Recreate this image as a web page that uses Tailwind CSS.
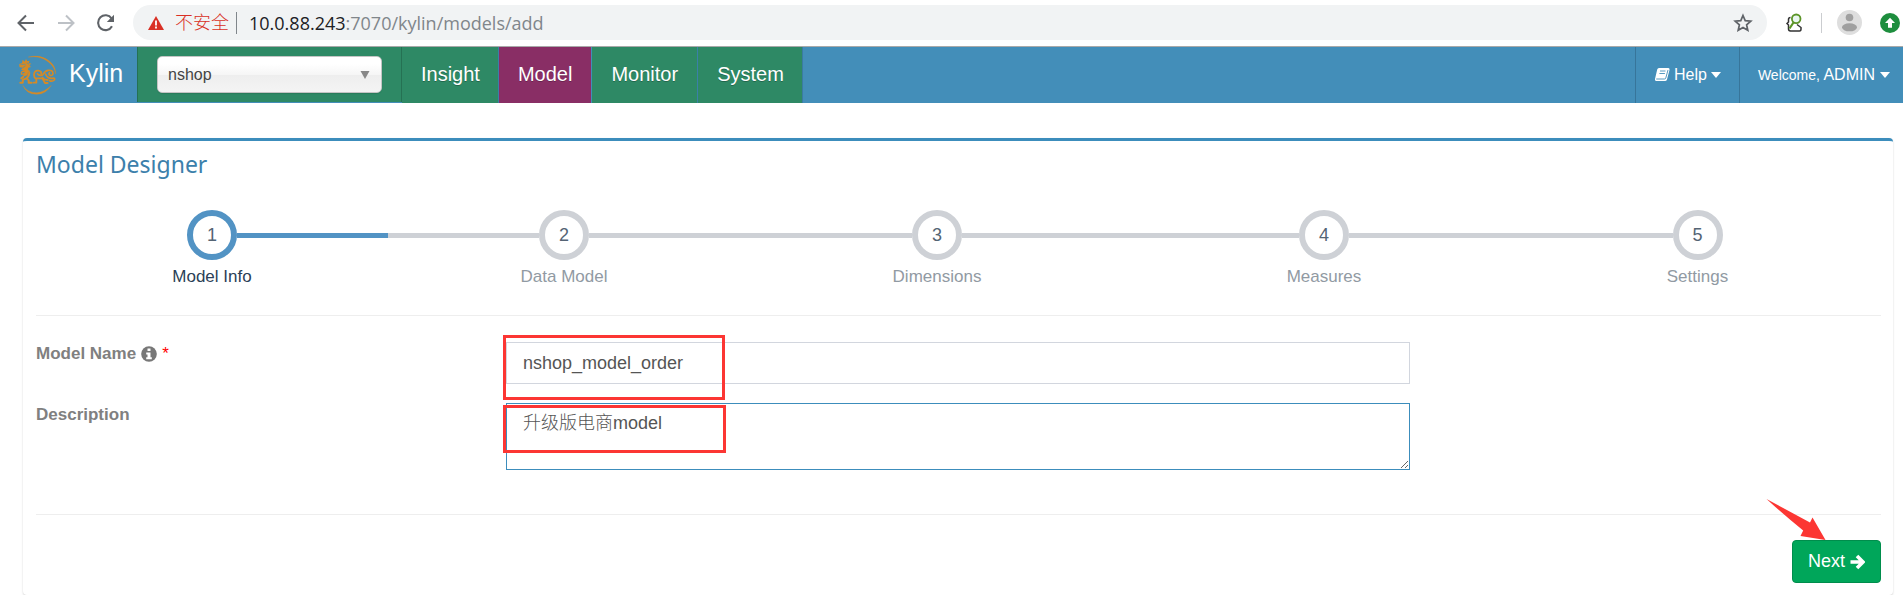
<!DOCTYPE html>
<html lang="en">
<head>
<meta charset="utf-8">
<title>Kylin - Model Designer</title>
<script src="https://cdn.jsdelivr.net/npm/@tailwindcss/browser@4"></script>
</head>
<body class="bg-white font-['Liberation_Sans','Noto_Sans_CJK_SC',sans-serif] text-[17px] text-[#444]">

<!-- Browser toolbar -->
<div class="flex h-[47px] items-center border-b border-[#a9a9a9] bg-white pb-px pl-4 font-['Open_Sans','Noto_Sans_CJK_SC',sans-serif]">
  <button type="button" aria-label="Back" class="mr-5 size-5 text-[#5f6368]">
    <svg viewBox="0 0 20 20" class="size-5" fill="none" stroke="currentColor" stroke-width="2"><path d="M18 10H3M10 2.500 2.500 10l7.500 7.500"/></svg>
  </button>
  <button type="button" aria-label="Forward" class="mr-5 size-5 text-[#bdc1c6]">
    <svg viewBox="0 0 20 20" class="size-5" fill="none" stroke="currentColor" stroke-width="2"><path d="M2 10h15M10 2.500 17.500 10 10 17.500"/></svg>
  </button>
  <button type="button" aria-label="Reload" class="mr-[17px] size-5 text-[#5f6368]">
    <svg viewBox="0 0 20 20" class="size-5"><path d="M16 13.200A7.400 7.400 0 1 1 15.600 5.500" fill="none" stroke="currentColor" stroke-width="2.100"/><path d="M18 1.800v7.200h-7.200z" fill="currentColor"/></svg>
  </button>
  <div class="flex h-[35px] min-w-0 flex-1 items-center rounded-full bg-[#f1f3f4] pl-[14px] pr-3">
    <svg viewBox="0 0 18 16" class="mr-[10px] h-4 w-[18px] shrink-0"><path d="M9 1 17 15H1z" fill="#d93025"/><path d="M9 5.500v5M9 11.500v2" stroke="#fff" stroke-width="1.800"/></svg>
    <span class="text-[18px] font-light text-[#d93025]">不安全</span>
    <span class="ml-[7px] mr-3 h-[22px] w-px bg-[#80868b]"></span>
    <span class="flex-1 whitespace-nowrap text-[18px] leading-6 text-[#80868b]"><span class="text-[#202124]">10.0.88.243</span>:7070/kylin/models/add</span>
    <button type="button" aria-label="Bookmark this page" class="mr-[2px] size-5 text-[#5f6368]">
      <svg viewBox="0 0 20 20" class="size-5" fill="none" stroke="currentColor" stroke-width="1.700"><path d="m10 2.500 2.200 5.100 5.600.5-4.200 3.700 1.200 5.500-4.800-2.900-4.800 2.900 1.200-5.500-4.200-3.700 5.600-.5z"/></svg>
    </button>
  </div>
  <button type="button" aria-label="Extension" class="ml-[18px] size-5">
    <svg viewBox="0 0 20 20" class="size-5" fill="none"><path d="M5.500 4.500Q3.500 4.500 3.500 6.500V9L2 10.500 3.500 12v4q0 1.800 2 2h9q1.500 0 1.500-2v-1.500l-4-3" stroke="#333" stroke-width="1.500"/><circle cx="11.200" cy="5.800" r="4.300" fill="#e9f6f0" stroke="#5b9427" stroke-width="1.800"/><path d="m8.500 9.500-4 6" stroke="#5b9427" stroke-width="2.200"/></svg>
  </button>
  <span class="ml-4 h-5 w-px bg-[#cbcdd0]"></span>
  <button type="button" aria-label="Profile" class="ml-[15px] size-[25px]">
    <svg viewBox="0 0 25 25" class="size-[25px]"><circle cx="12.500" cy="12.500" r="12.500" fill="#dedede"/><circle cx="12.500" cy="7.500" r="3.800" fill="#a0a0a0"/><ellipse cx="12.500" cy="17.300" rx="7.500" ry="4" fill="#a0a0a0"/></svg>
  </button>
  <button type="button" aria-label="Update available" class="ml-[18px] mr-[3px] size-5">
    <svg viewBox="0 0 20 20" class="size-5"><circle cx="10" cy="10" r="10" fill="#1e8e3e"/><path d="M10 4.800 15 10h-3v4.800H8V10H5z" fill="#fff"/></svg>
  </button>
</div>

<!-- Application navigation -->
<nav class="flex h-14 items-stretch bg-[#438eb9] text-white text-shadow-[0_1px_0_rgb(0_0_0/0.25)]">
  <a href="#" class="flex w-[137px] items-center pl-3 text-[25px] text-shadow-none">
    <svg viewBox="0 0 150 138" class="mr-[7px] h-[46px] w-[50px] shrink-0" fill="none" stroke="#d58a26" stroke-linecap="round" stroke-linejoin="round">
      <path d="M50 15Q85 6 112 27Q132 43 131 66Q127 42 108 29Q84 10 50 15z" fill="#d58a26" stroke-width="1"/>
      <path d="M33 101Q46 122 74 122Q98 121 118 100Q101 128 73 127Q43 126 33 101z" fill="#d58a26" stroke-width="1"/>
      <path d="M22 36l8-3 2-10 6 6 4-8 4 7 7-2-3 7 8 2-6 5 5 5-8 2-1 7 7 3-7 5-2 8-10 3-3-5 6-5-4-7-8-3 5-6-9-1-1-4z" fill="#d58a26" stroke="none"/>
      <path d="M37 59q-10-3-9 7q7 1 13-3" stroke-width="4"/>
      <path d="M52 62Q51 74 42 80l-9 3-1 9h-7M44 79l6 6v7h9M34 74l-6 5" stroke-width="6"/>
      <path d="M65 92h8V82q-7-5-7-13 0-14 13-13 10 1 9 10M74 79h17l8 14h8M92 77q4 7 15 7" stroke-width="5.500"/>
      <path d="M76 65q5 8 16 4q6-12 16-14q14-2 15 9-1 8-9 6-6-4-1-8M101 66q4 14 20 13q10-2 6 5-6 6-14 2" stroke-width="5"/>
      <path d="M27 37h12M33 47l7-5M45 33l5 3" stroke="#438eb9" stroke-width="2"/>
    </svg>
    <span class="pb-[2px]">Kylin</span>
  </a>
  <div class="mb-px flex w-[265px] items-center border-x border-[#257153] bg-[#2e8965] px-[19px]">
    <div class="relative w-full">
      <select aria-label="Project" class="block h-[37px] w-full appearance-none rounded-[5px] border border-[#c4c4c4] bg-[linear-gradient(#fff_20%,#f6f6f6_50%,#eee_52%,#f4f4f4_100%)] pl-[10px] text-[16px] text-[#444] shadow-[0_1px_1px_rgb(0_0_0/0.1)] text-shadow-none"><option>nshop</option></select>
      <svg viewBox="0 0 10 8" class="pointer-events-none absolute right-3 top-[15px] h-2 w-[10px]"><path d="M.5 0h9L5 8z" fill="#888"/></svg>
    </div>
  </div>
  <ul class="flex text-[20px]">
    <li class="flex border-r border-[#3a80a8]"><a href="#" class="flex items-center bg-[#2e8965] pb-[2px] pl-[19px] pr-[18px]">Insight</a></li>
    <li class="flex border-r border-[#438eb9]"><a href="#" aria-current="page" class="flex items-center bg-[#892e65] px-[19px] pb-[2px]">Model</a></li>
    <li class="flex border-r border-[#3a80a8]"><a href="#" class="flex items-center bg-[#2e8965] px-[19px] pb-[2px]">Monitor</a></li>
    <li class="flex border-r border-[#3a7ba2]"><a href="#" class="flex items-center bg-[#2e8965] pb-[2px] pl-[19px] pr-[18px]">System</a></li>
  </ul>
  <ul class="ml-auto flex text-[16px]">
    <li class="flex border-l border-[#37759a]">
      <button type="button" class="flex items-center gap-1 px-[18px]">
        <svg viewBox="0 0 16 16" class="size-4"><path d="M5 1h9.500q1.500.3 1 2L13 12.500q-.5 1.500-2 1.500H2q-1.500-.4-1-2L3.200 2.500Q3.600 1.200 5 1z" fill="#fff"/><path d="M6 4h5.500M5.400 6.500h5.500M2.200 12h8.300q1 0 1.300-1L14 3" stroke="#438eb9" stroke-width=".9" fill="none"/></svg>
        Help
        <svg viewBox="0 0 10 6" class="h-[6px] w-[10px]"><path d="M0 0h10L5 6z" fill="#fff"/></svg>
      </button>
    </li>
    <li class="flex border-l border-[#37759a]">
      <button type="button" class="flex items-center gap-[5px] pl-[18px] pr-[13px]">
        <span><small class="text-[14px]">Welcome,</small> ADMIN</span>
        <svg viewBox="0 0 10 6" class="h-[6px] w-[10px]"><path d="M0 0h10L5 6z" fill="#fff"/></svg>
      </button>
    </li>
  </ul>
</nav>

<!-- Model designer -->
<main class="ml-[23px] mr-[10px] mt-[35px] rounded-[4px] border-t-3 border-[#3c8dbc] bg-white pl-[13px] pr-3 pb-3 shadow-[0_1px_2px_rgb(0_0_0/0.18)]">
  <h1 class="pt-[7px] font-['Noto_Sans','Open_Sans',sans-serif] text-[23px] leading-8 text-[#3c80ab]">Model Designer</h1>

  <ol class="mt-[30px] grid grid-cols-[352fr_352fr_394fr_380fr_367fr] text-center leading-6 text-[#919aa3]">
    <li class="text-[#2b3f57]">
      <div class="flex items-center">
        <span class="flex-1"></span>
        <span class="flex size-[50px] items-center justify-center rounded-full border-6 border-[#5293c4] text-[18px] text-[#546474]">1</span>
        <span class="h-[5px] flex-1 bg-[#5293c4]"></span>
      </div>
      <div class="mt-[5px]">Model Info</div>
    </li>
    <li>
      <div class="flex items-center">
        <span class="h-[5px] flex-1 bg-[#ced1d6]"></span>
        <span class="flex size-[50px] items-center justify-center rounded-full border-6 border-[#ced1d6] text-[18px] text-[#546474]">2</span>
        <span class="h-[5px] flex-1 bg-[#ced1d6]"></span>
      </div>
      <div class="mt-[5px]">Data Model</div>
    </li>
    <li>
      <div class="flex items-center">
        <span class="h-[5px] flex-1 bg-[#ced1d6]"></span>
        <span class="flex size-[50px] items-center justify-center rounded-full border-6 border-[#ced1d6] text-[18px] text-[#546474]">3</span>
        <span class="h-[5px] flex-1 bg-[#ced1d6]"></span>
      </div>
      <div class="mt-[5px]">Dimensions</div>
    </li>
    <li>
      <div class="flex items-center">
        <span class="h-[5px] flex-1 bg-[#ced1d6]"></span>
        <span class="flex size-[50px] items-center justify-center rounded-full border-6 border-[#ced1d6] text-[18px] text-[#546474]">4</span>
        <span class="h-[5px] flex-1 bg-[#ced1d6]"></span>
      </div>
      <div class="mt-[5px]">Measures</div>
    </li>
    <li>
      <div class="flex items-center">
        <span class="h-[5px] flex-1 bg-[#ced1d6]"></span>
        <span class="flex size-[50px] items-center justify-center rounded-full border-6 border-[#ced1d6] text-[18px] text-[#546474]">5</span>
        <span class="flex-1"></span>
      </div>
      <div class="mt-[5px]">Settings</div>
    </li>
  </ol>

  <hr class="mt-[26px] border-[#eee]">

  <form>
    <div class="mt-[26px] grid grid-cols-[470fr_904fr_471fr]">
      <label for="model-name" class="flex items-center gap-[5px] self-start font-bold leading-6 text-[#808080]">
        Model Name
        <svg viewBox="0 0 16 16" class="size-4"><circle cx="8" cy="8" r="7.800" fill="#777"/><path d="M6.500 2.500h3v2.400h-3zM5.200 6.500h4.300v4.800h1.300v1.900H5.200v-1.900h1.300V8.400H5.200z" fill="#fff"/></svg>
        <span class="font-normal text-[#f00]">*</span>
      </label>
      <div class="relative">
        <input id="model-name" type="text" value="nshop_model_order" class="block h-[42px] w-full border border-[#d2d6de] px-4 text-[18px] text-[#555] outline-none">
        <span class="pointer-events-none absolute -left-[3px] -top-[7px] h-[65px] w-[222px] border-3 border-[#fc3633]"></span>
      </div>
    </div>
    <div class="mt-[19px] grid grid-cols-[470fr_904fr_471fr]">
      <label for="description" class="self-start font-bold leading-6 text-[#808080]">Description</label>
      <div class="relative">
        <textarea id="description" class="block h-[67px] w-full resize border border-[#3c8dbc] px-4 py-[7px] text-[18px] leading-[25px] font-light text-[#555] outline-none">升级版电商model</textarea>
        <span class="pointer-events-none absolute -left-[3px] top-[2px] h-12 w-[223px] border-3 border-[#fc3633]"></span>
      </div>
    </div>

    <hr class="mt-11 border-[#eee]">

    <div class="mt-[25px] flex justify-end">
      <div class="relative">
        <button type="button" class="flex h-[43px] items-center gap-1 rounded-[4px] border border-[#008d4c] bg-[#00a65a] px-[15px] text-[18px] text-white">
          Next
          <svg viewBox="0 0 16 16" class="size-4"><path d="M1.500 8h11M8 2l6 6-6 6" fill="none" stroke="#fff" stroke-width="3.600"/></svg>
        </button>
        <svg viewBox="0 0 60 42" class="pointer-events-none absolute -top-[41px] right-[55px] h-[42px] w-[60px]"><path d="M.5 0 44 23.500 46.500 18.500 59.500 41 34.500 37 37.200 31.500Q18 16 .5 0z" fill="#fc3633"/></svg>
      </div>
    </div>
  </form>
</main>
</body>
</html>
